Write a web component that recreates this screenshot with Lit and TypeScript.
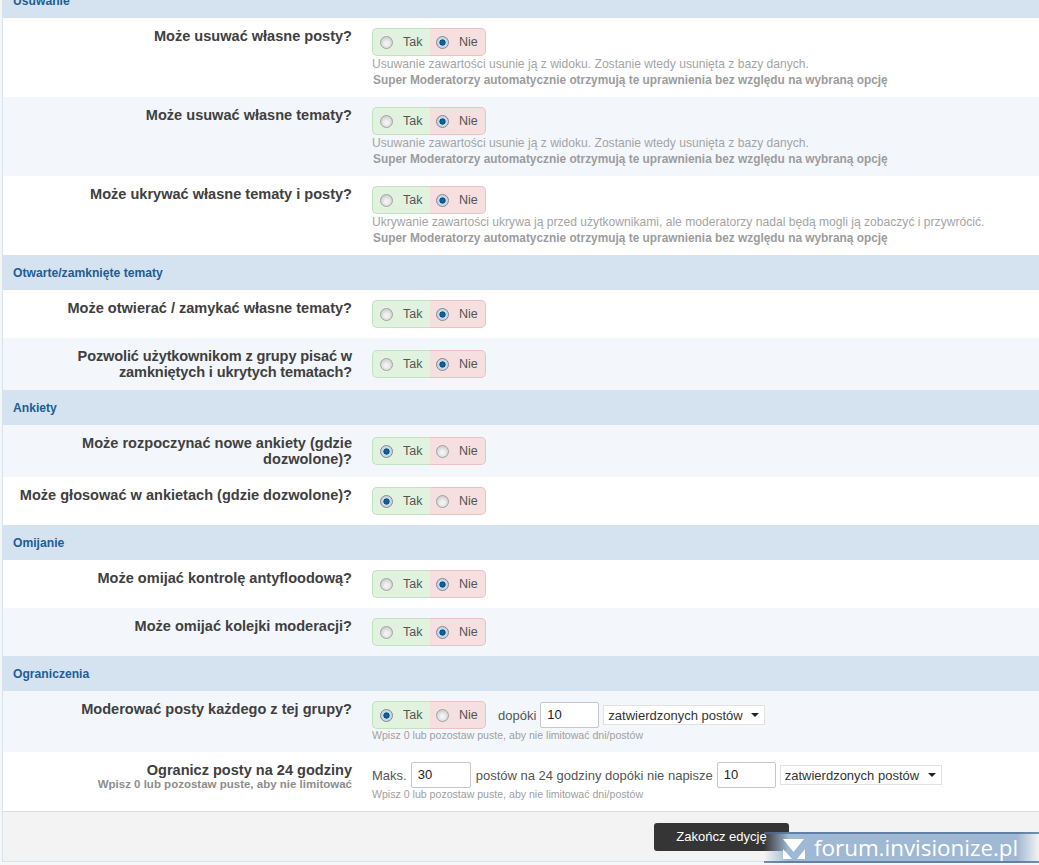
import { LitElement, html, css, nothing } from "lit";
import { customElement } from "lit/decorators.js";

const SUPER = "Super Moderatorzy automatycznie otrzymują te uprawnienia bez względu na wybraną opcję";
const DEL = "Usuwanie zawartości usunie ją z widoku. Zostanie wtedy usunięta z bazy danych.";
const HINT = "Wpisz 0 lub pozostaw puste, aby nie limitować dni/postów";

type Row = { label: string; on: boolean; desc?: string; strong?: boolean; tall?: boolean; tight?: boolean; alt: boolean; h: number };

const yn = (on: boolean) => html`
  <span class="yn">
    <span class="side yes"><i class="radio ${on ? "checked" : ""}"></i><span>Tak</span></span>
    <span class="side no"><i class="radio ${on ? "" : "checked"}"></i><span>Nie</span></span>
  </span>`;

const head = (t: string) => html`<div class="head">${t}</div>`;

const row = (r: Row) => html`
  <div class="row ${r.alt ? "alt" : ""}" style="height:${r.h}px">
    <div class="label ${r.tight ? "tight" : ""}">${r.label}</div>
    <div class="field ${r.tall ? "tall" : ""}">
      ${yn(r.on)}
      ${r.desc ? html`<div class="desc">${r.desc}</div>` : nothing}
      ${r.strong ? html`<div class="desc strong">${SUPER}</div>` : nothing}
    </div>
  </div>`;

const sel = () => html`<span class="select">zatwierdzonych postów<i class="caret"></i></span>`;

@customElement("app-root")
export class AppRoot extends LitElement {
  static styles = css`
    :host { display: block; width: 1039px; height: 865px; overflow: hidden; position: relative; background: #f6f6f6;
      font-family: "Liberation Sans", Arial, sans-serif; color: #404040; }
    .wrap { margin: -17px 0 0 2px; border-left: 1px solid #d5e2f0; border-bottom: 1px solid #d5e2f0; }
    .head { height: 35px; box-sizing: border-box; background: #d5e2f0; color: #1d5e93; font-size: 12.15px; font-weight: bold;
      line-height: 35px; padding: 1px 0 0 10px; }
    .row { display: flex; box-sizing: border-box; background: #fff; padding-top: 10px; }
    .row.alt { background: #f3f7fb; }
    .label { width: 349px; flex: none; text-align: right; font-size: 14.55px; font-weight: bold; line-height: 16px; color: #404040; }
    .label.tight { letter-spacing: -0.12px; }
    .label small { display: block; font-size: 11.5px; line-height: 13px; color: #8d8d8d; }
    .field { margin-left: 20px; flex: 1; min-width: 0; }
    .field.tall { padding-top: 2px; }
    .yn { display: inline-flex; height: 28px; box-sizing: border-box; vertical-align: top; font-size: 12.5px; color: #555; }
    .side { display: flex; align-items: center; box-sizing: border-box; height: 28px; }
    .side i { margin-right: 10px; }
    .yes { width: 58px; background: #e1f3df; border: 1px solid #bfe3bd; border-right: 0; border-radius: 5px 0 0 5px; padding-left: 7px; }
    .no { width: 56px; background: #f5dfdf; border: 1px solid #ebc1c1; border-left: 0; border-radius: 0 5px 5px 0; padding-left: 6px; }
    .radio { display: block; width: 13px; height: 13px; border-radius: 50%; box-sizing: border-box; flex: none;
      border: 1px solid #a2a2a2; background: radial-gradient(circle at 50% 60%, #f2f2f2 20%, #c9c9c9 85%); }
    .radio.checked { border: 1px solid #7f8a98; background: radial-gradient(circle, #0d6ea6 0, #0a4f80 36%, #cfd9e4 44%, #c6d0dc 100%); }
    .desc { font-size: 12.1px; line-height: 16px; color: #a4a4a4; white-space: nowrap; }
    .desc.strong { font-weight: bold; font-size: 11.87px; color: #9c9c9c; padding-left: 1px; }
    .hint { font-size: 10.58px; line-height: 12px; color: #a0a0a0; white-space: nowrap; }
    .inline { display: flex; align-items: center; font-size: 13px; color: #555; white-space: nowrap; }
    .input { display: inline-block; box-sizing: border-box; width: 59px; height: 26px; margin-left: 4px; border: 1px solid #c6c6c6; border-radius: 2px; background: #fff;
      line-height: 24px; padding-left: 6px; font-size: 13px; color: #222; }
    .input.wide { width: 60px; }
    .gap-l { margin-left: 12px; }
    .gap { margin-left: 5px; }
    .input.gap { margin-left: 4px; }
    .sel-wrap { margin-left: 4px; display: flex; }
    .select { display: inline-flex; align-items: center; justify-content: space-between; box-sizing: border-box; width: 162px; height: 20px;
      border: 1px solid #e2e2e2; background: #fff; font-size: 13px; color: #333; padding: 0 5px 0 4px; }
    .caret { width: 0; height: 0; border-left: 4px solid transparent; border-right: 4px solid transparent; border-top: 4px solid #222; }
    .foot { height: 50px; box-sizing: border-box; background: #f3f3f3; border-top: 1px solid #dcdcdc; display: flex; justify-content: flex-end; padding: 11px 250px 0 0; }
    .btn { width: 135px; height: 28px; box-sizing: border-box; background: #353535; border-radius: 3px; color: #fff; font-size: 13px; line-height: 28px; text-align: center; }
    .mark { position: absolute; left: 764px; top: 832px; width: 275px; height: 31px; display: flex; align-items: center; box-sizing: border-box; padding-left: 18px;
      background: linear-gradient(90deg, rgba(159,184,211,0) 0, #9fb8d3 9%, #9fb8d3 92%, rgba(159,184,211,0) 100%);
      border-top: 2px solid rgba(75,110,150,.75); border-bottom: 2px solid rgba(75,110,150,.75);
    }
    .mark svg { flex: none; }
    .mark span { margin-left: 8px; font-family: "Open Sans", sans-serif; font-size: 22.4px; color: #fff; line-height: 27px; white-space: nowrap; }
  `;

  render() {
    return html`
      <div class="wrap">
        ${head("Usuwanie")}
        ${row({ label: "Może usuwać własne posty?", on: false, desc: DEL, strong: true, h: 79, alt: false })}
        ${row({ label: "Może usuwać własne tematy?", on: false, desc: DEL, strong: true, h: 79, alt: true })}
        ${row({ label: "Może ukrywać własne tematy i posty?", on: false, desc: "Ukrywanie zawartości ukrywa ją przed użytkownikami, ale moderatorzy nadal będą mogli ją zobaczyć i przywrócić.", strong: true, h: 79, alt: false })}
        ${head("Otwarte/zamknięte tematy")}
        ${row({ label: "Może otwierać / zamykać własne tematy?", on: false, h: 48, alt: false })}
        ${row({ label: "Pozwolić użytkownikom z grupy pisać w zamkniętych i ukrytych tematach?", on: false, h: 52, tall: true, tight: true, alt: true })}
        ${head("Ankiety")}
        ${row({ label: "Może rozpoczynać nowe ankiety (gdzie dozwolone)?", on: true, h: 52, tall: true, alt: true })}
        ${row({ label: "Może głosować w ankietach (gdzie dozwolone)?", on: true, h: 48, alt: false })}
        ${head("Omijanie")}
        ${row({ label: "Może omijać kontrolę antyfloodową?", on: false, h: 48, alt: false })}
        ${row({ label: "Może omijać kolejki moderacji?", on: false, h: 48, alt: true })}
        ${head("Ograniczenia")}
        <div class="row alt" style="height:61px">
          <div class="label">Moderować posty każdego z tej grupy?</div>
          <div class="field">
            <div class="inline">${yn(true)}<span class="gap-l">dopóki</span>
              <span class="input">10</span>
              <span class="sel-wrap">${sel()}</span></div>
            <div class="hint">${HINT}</div>
          </div>
        </div>
        <div class="row" style="height:59px">
          <div class="label">Ogranicz posty na 24 godziny<small>Wpisz 0 lub pozostaw puste, aby nie limitować</small></div>
          <div class="field">
            <div class="inline"><span>Maks.</span>
              <span class="input wide">30</span>
              <span class="gap">postów na 24 godziny dopóki nie napisze</span>
              <span class="input gap">10</span>
              <span class="sel-wrap">${sel()}</span></div>
            <div class="hint">${HINT}</div>
          </div>
        </div>
        <div class="foot"><div class="btn">Zakończ edycję</div></div>
      </div>
      <div class="mark">
        <svg width="24" height="24" viewBox="0 0 24 24"><path d="M1 3H22L11.5 16Z M1 13 10 23H1Z M23 13V23H15Z" fill="#fff"/></svg>
        <span>forum.invisionize.pl</span>
      </div>
    `;
  }
}
